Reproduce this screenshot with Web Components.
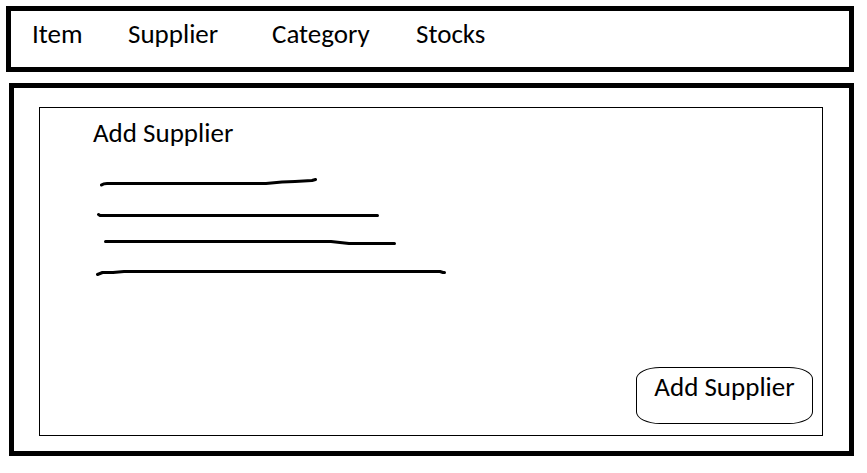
<!DOCTYPE html>
<html lang="en">
<head>
<meta charset="utf-8">
<title>Add Supplier</title>
<style>
  body { margin: 0; background: #fff; color: #000; font: 27px/32px Carlito, Lato, sans-serif; }
</style>
</head>
<body>
<stock-app></stock-app>

<template id="app">
  <style>
    :host { display: flex; flex-direction: column; gap: 11px; box-sizing: border-box; min-height: 100vh; padding: 6px 13px 17px 6px; }
    main-frame { flex: 1; margin-left: 3px; }
  </style>
  <nav-bar>
    <nav-link>Item</nav-link>
    <nav-link>Supplier</nav-link>
    <nav-link>Category</nav-link>
    <nav-link>Stocks</nav-link>
  </nav-bar>
  <main-frame>
    <supplier-panel>
      <span slot="title">Add Supplier</span>
      <scribble-lines></scribble-lines>
      <round-button slot="action">Add Supplier</round-button>
    </supplier-panel>
  </main-frame>
</template>

<template id="nav">
  <style>
    :host { display: block; border: 5px solid #000; }
    nav { display: grid; grid-template-columns: 96px 144px 144px auto; justify-content: start; padding: 7px 21px 17px; }
  </style>
  <nav><slot></slot></nav>
</template>

<template id="link">
  <style>
    :host { display: block; }
    a { color: inherit; text-decoration: none; }
  </style>
  <a href="#"><slot></slot></a>
</template>

<template id="frame">
  <style>
    :host { display: flex; border: 5px solid #000; }
    main { flex: 1; display: flex; padding: 19px 26px 15px 25px; }
    ::slotted(*) { flex: 1; }
  </style>
  <main><slot></slot></main>
</template>

<template id="panel">
  <style>
    :host { display: flex; border: 1px solid #000; }
    section { flex: 1; display: flex; flex-direction: column; padding: 9px 9px 11px 53px; }
    h1 { margin: 0; font: inherit; }
    .body { flex: 1; padding-top: 24px; }
    footer { display: flex; justify-content: flex-end; }
  </style>
  <section>
    <h1><slot name="title"></slot></h1>
    <div class="body"><slot></slot></div>
    <footer><slot name="action"></slot></footer>
  </section>
</template>

<template id="lines">
  <style>
    :host { display: block; }
    svg { display: block; }
    path { fill: none; stroke: #000; stroke-width: 3; stroke-linecap: round; stroke-linejoin: round; }
  </style>
  <svg width="360" height="110" viewBox="93 173 360 110" aria-hidden="true">
    <path d="M101.500 185 Q103.500 183.500 107 183.500 H266 L282 182 L295 181.500 L312 180.500 L315.500 179.500"/>
    <path d="M98.500 214.500 L100 215.500 H377.500"/>
    <path d="M105.500 241.500 H331 L349 243.500 H394.500"/>
    <path d="M97.500 274.500 L102.500 272.500 L113 272.500 L124 271.500 H440 L443 272.500 H444.500"/>
  </svg>
</template>

<template id="button">
  <style>
    :host { display: block; }
    button { display: block; margin: 0; min-width: 177px; padding: 3px 16px 20px; border: 1px solid #000; border-radius: 24px / 12px; background: #fff; color: inherit; font: inherit; white-space: nowrap; }
  </style>
  <button type="button"><slot></slot></button>
</template>

<script>
  const define = (name, id) => customElements.define(name, class extends HTMLElement {
    constructor() {
      super();
      this.attachShadow({ mode: "open" }).append(document.getElementById(id).content.cloneNode(true));
    }
  });
  define("nav-link", "link");
  define("nav-bar", "nav");
  define("scribble-lines", "lines");
  define("round-button", "button");
  define("supplier-panel", "panel");
  define("main-frame", "frame");
  define("stock-app", "app");
</script>
</body>
</html>
